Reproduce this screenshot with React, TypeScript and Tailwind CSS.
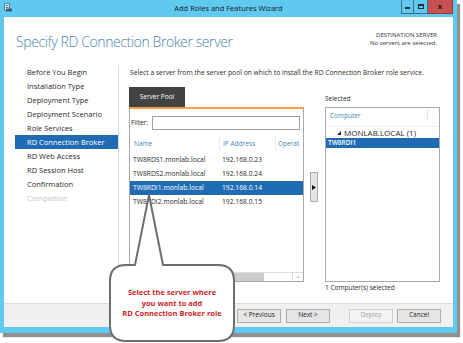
import React from 'react';

const navItems = [
  { label: 'Before You Begin' },
  { label: 'Installation Type' },
  { label: 'Deployment Type' },
  { label: 'Deployment Scenario' },
  { label: 'Role Services' },
  { label: 'RD Connection Broker', active: true },
  { label: 'RD Web Access' },
  { label: 'RD Session Host' },
  { label: 'Confirmation' },
  { label: 'Completion', disabled: true },
];

const poolRows = [
  { name: 'TW8RDS1.monlab.local', ip: '192.168.0.23' },
  { name: 'TW8RDS2.monlab.local', ip: '192.168.0.24' },
  { name: 'TW8RDI1.monlab.local', ip: '192.168.0.14', selected: true },
  { name: 'TW8RDI2.monlab.local', ip: '192.168.0.15' },
];

const WizardButton: React.FC<{ label: string; disabled?: boolean; className?: string }> = ({
  label,
  disabled,
  className = '',
}) => (
  <button
    className={`flex h-[14px] w-[44px] items-center justify-center border text-[6.5px] leading-none ${
      disabled
        ? 'border-[#cfcfcf] bg-[#f4f4f4] text-[#a3a3a3]'
        : 'border-[#acacac] bg-[#e5e5e5] text-[#1e1e1e]'
    } ${className}`}
  >
    {label}
  </button>
);

export default function App() {
  return (
    <div className="relative h-[343px] w-[463px] overflow-hidden bg-white font-['Open_Sans',sans-serif] text-[#1e1e1e]">
      <div className="flex h-[333px] w-[457px] flex-col bg-[#5fc9ef] shadow-[3px_4px_1px_#909090]">
        {/* title bar */}
        <div className="grid h-[17px] grid-cols-[1fr_auto_1fr] items-start">
          <div className="pl-[4px] pt-[3px]">
            <svg width="8" height="9" viewBox="0 0 8 9">
              <rect x="0.5" y="0.5" width="5" height="7" fill="#f4f7fa" stroke="#5a7d99" />
              <rect x="1.5" y="2" width="3" height="1" fill="#3d76b8" />
              <rect x="1.5" y="4" width="3" height="1" fill="#3d76b8" />
              <rect x="2" y="5.5" width="6" height="3" fill="#3b5f84" />
            </svg>
          </div>
          <div className="pt-[3px] text-center text-[7.5px] leading-[10px] text-[#1b1b1b]">
            Add Roles and Features Wizard
          </div>
          <div className="flex justify-end pr-[4px]">
            <div className="flex h-[14px] w-[13px] items-end justify-center border-x border-b border-[#3d6f8a] pb-[4px]">
              <div className="h-[2px] w-[5px] bg-[#1f2d36]" />
            </div>
            <div className="flex h-[14px] w-[14px] items-center justify-center border-b border-r border-[#3d6f8a]">
              <div className="h-[5px] w-[6px] border border-t-2 border-[#1f2d36]" />
            </div>
            <div className="flex h-[14px] w-[25px] items-center justify-center border-b border-r border-[#8f3a3a] bg-[#c75050] text-[7px] font-bold leading-none text-[#2a1010]">
              x
            </div>
          </div>
        </div>

        {/* client area */}
        <div className="mx-[4px] mb-[6px] flex flex-1 flex-col bg-white">
          {/* header */}
          <div className="flex h-[48px] justify-between pl-[12px] pr-[16px]">
            <div className="flex items-center pt-[1px] text-[14px] font-light tracking-[-0.4px] text-[#4b87a5]">
              Specify RD Connection Broker server
            </div>
            <div className="pt-[14px] text-right text-[6px] leading-[8px] text-[#333]">
              <div>DESTINATION SERVER</div>
              <div>No servers are selected.</div>
            </div>
          </div>

          {/* body */}
          <div className="flex flex-1">
            <div className="w-[115px] border-r border-[#dadada] pl-[11px]">
              {navItems.map((item) => (
                <div
                  key={item.label}
                  className={`h-[14px] pl-[12px] text-[7.5px] leading-[14px] ${
                    item.active
                      ? 'bg-[#1f6cb5] text-white'
                      : item.disabled
                        ? 'text-[#c4c4c4]'
                        : 'text-[#2b2b2b]'
                  }`}
                >
                  {item.label}
                </div>
              ))}
            </div>

            <div className="flex flex-1 flex-col pl-[10px]">
              <div className="pl-[1px] pt-[4px] text-[6.75px] leading-[8px] text-[#2b2b2b]">
                Select a server from the server pool on which to install the RD Connection Broker role service.
              </div>

              <div className="mt-[10px] flex items-start">
                {/* server pool */}
                <div className="w-[175px]">
                  <div className="flex h-[20px] w-[56px] items-center justify-center bg-[#424242] text-[6.5px] text-white">
                    Server Pool
                  </div>
                  <div className="flex h-[175px] flex-col border border-t-2 border-[#a9a9a9] border-t-[#f0a53f]">
                    <div className="mt-[7px] flex items-center">
                      <span className="w-[22px] pl-[1px] text-[6.5px]">Filter:</span>
                      <div className="h-[14px] w-[148px] border border-[#a0a0a0] bg-white" />
                    </div>
                    <div className="mt-[6px] flex h-[15px] items-center text-[6.5px] text-[#3f87b5]">
                      <div className="w-[89px] pl-[4px]">Name</div>
                      <div className="h-full w-[56px] border-l border-[#ececec] pl-[3px] leading-[15px]">IP Address</div>
                      <div className="h-full flex-1 overflow-hidden whitespace-nowrap border-l border-[#ececec] pl-[2px] leading-[15px]">
                        Operat
                      </div>
                    </div>
                    <div className="mt-[2px]">
                      {poolRows.map((row) => (
                        <div
                          key={row.name}
                          className={`flex h-[14px] items-center text-[6.75px] ${
                            row.selected ? 'bg-[#1f6cb5] text-white' : 'text-[#2b2b2b]'
                          }`}
                        >
                          <div className="w-[89px] pl-[3px]">{row.name}</div>
                          <div className="pl-[3px]">{row.ip}</div>
                        </div>
                      ))}
                    </div>
                    <div className="flex-1" />
                    <div className="flex h-[9px] border-t border-[#dedede]">
                      <div className="w-[134px] bg-[#cdcdcd]" />
                      <div className="flex-1" />
                      <div className="flex w-[11px] items-center justify-center border-l border-[#dedede] text-[6px] leading-none text-[#777]">
                        &gt;
                      </div>
                    </div>
                  </div>
                </div>

                {/* add button */}
                <div className="ml-[6px] mt-[85px] flex h-[30px] w-[8px] items-center justify-center border border-[#adadad] bg-[#e3e3e3]">
                  <svg width="4" height="5" viewBox="0 0 4 5">
                    <path d="M0 0 L4 2.5 L0 5 Z" fill="#111" />
                  </svg>
                </div>

                {/* selected */}
                <div className="ml-[7px] w-[115px]">
                  <div className="flex h-[20px] items-center pt-[4px] text-[6.5px] text-[#2b2b2b]">Selected</div>
                  <div className="h-[175px] border border-[#a9a9a9]">
                    <div className="flex h-[19px] border-b border-[#eeeeee]">
                      <div className="flex-1 pl-[4px] pt-[3px] text-[6.5px] text-[#3f87b5]">Computer</div>
                      <div className="mt-[1px] h-[10px] w-[12px] border-l border-[#e2e2e2]" />
                    </div>
                    <div className="flex h-[11px] items-center pl-[11px] text-[8px] leading-none text-[#1e1e1e]">
                      <svg width="4" height="4" viewBox="0 0 4 4" className="mr-[3px]">
                        <path d="M4 0 L4 4 L0 4 Z" fill="#222" />
                      </svg>
                      MONLAB.LOCAL (1)
                    </div>
                    <div className="flex h-[10px] items-center bg-[#1f6cb5] pl-[2px] text-[6.5px] font-semibold text-white">
                      TW8RDI1
                    </div>
                  </div>
                  <div className="mt-[2px] text-[6.5px] leading-[8px] text-[#2b2b2b]">1 Computer(s) selected</div>
                </div>
              </div>
            </div>
          </div>

          {/* footer */}
          <div className="flex h-[24px] items-center justify-end border-t border-[#dcdcdc] bg-[#f0f0f0] pr-[12px]">
            <WizardButton label="< Previous" />
            <WizardButton label="Next >" className="ml-[5px]" />
            <WizardButton label="Deploy" disabled className="ml-[19px]" />
            <WizardButton label="Cancel" className="ml-[4px]" />
          </div>
        </div>
      </div>

      {/* callout */}
      <svg className="pointer-events-none absolute left-0 top-0" width="463" height="343" viewBox="0 0 463 343">
        <path
          d="M126 265 L135 265 L149 195 L163 265 L218 265 Q234 265 234 281 L234 325 Q234 341 218 341 L126 341 Q110 341 110 325 L110 281 Q110 265 126 265 Z"
          fill="white"
          stroke="#6e6e6e"
          strokeWidth="2"
          strokeLinejoin="round"
        />
      </svg>
      <div className="absolute left-[110px] top-[287px] w-[124px] text-center text-[7.5px] font-bold leading-[10.5px] text-[#d11f1f]">
        <div>Select the server where</div>
        <div>you want to add</div>
        <div>RD Connection Broker role</div>
      </div>
    </div>
  );
}
